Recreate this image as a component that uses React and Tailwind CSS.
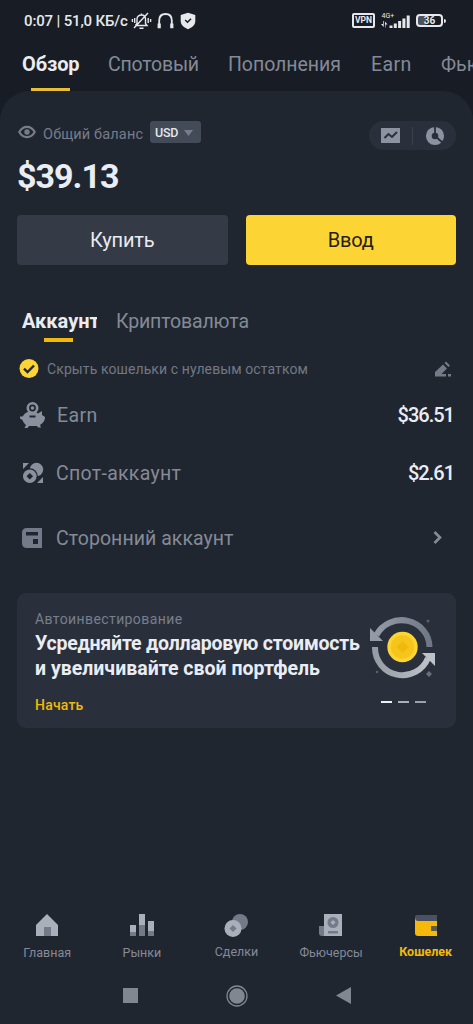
import React from "react";

const TopTab = ({ className, children }) => (
  <span className={`shrink-0 whitespace-nowrap ${className}`}>{children}</span>
);

function StatusBar() {
  return (
    <div className="flex h-[41px] shrink-0 items-center pl-6 pr-[27px] text-[#e6e8ec]">
      <span className="w-[106px] whitespace-nowrap text-[15px] font-medium leading-[22px] tracking-[-0.150px]">0:07 | 51,0 КБ/с</span>
      <svg className="ml-px h-5 w-[21px]" viewBox="0 0 21 20" fill="none" stroke="currentColor" strokeWidth="1.4">
        <path d="M4.500 14.500H16l-1.500-2V8.200C14.500 5.500 13 4 10.500 4S6 5.500 6 8.200v4.300l-1.500 2M8.500 17.200h4M10.500 2.500V4M3.700 7v5M1.400 8v3M17.200 7v5M19.600 8v3M3 17 17 2" />
      </svg>
      <svg className="ml-1 h-5 w-[19px]" viewBox="0 0 19 20" fill="none" stroke="currentColor">
        <path d="M3.200 14V9.500C3.200 5.500 5.700 3 9.500 3s6.300 2.500 6.300 6.500V14" strokeWidth="1.800" />
        <path d="M3.200 12.500v4.700M15.800 12.500v4.700" strokeWidth="3.200" />
      </svg>
      <svg className="ml-[5px] h-5 w-4" viewBox="0 0 16 20">
        <path d="M8 1.700 15.300 4v6c0 4-3.300 6.700-7.300 8.200C4 16.700.700 14 .700 10V4Z" fill="currentColor" />
        <path d="m5.200 9 2.300 2.300 3.500-3.600" fill="none" stroke="#181d25" strokeWidth="1.500" />
      </svg>
      <span className="flex-1" />
      <span className="flex h-[15px] w-[23px] items-center justify-center rounded-[2px] border-2 border-current text-[8.500px] font-bold leading-none">VPN</span>
      <svg className="ml-[6px] h-[18px] w-[30px]" viewBox="0 0 30 18" fill="currentColor">
        <text x="0.500" y="6" fontSize="7" fontFamily="Roboto, sans-serif">4G+</text>
        <path d="M2 9v3H0l2.700 3V9ZM4.500 15.500v-3h2L4 9.500v6ZM8.500 13.500h3V16h-3ZM12.800 11.500h3V16h-3ZM17.100 9h3v7h-3ZM21.400 6.500h3V16h-3ZM25.700 3.500h3V16h-3Z" />
      </svg>
      <span className="ml-[5px] flex h-[13px] w-[27px] items-center justify-center rounded-[4px] border-2 border-current bg-linear-to-r from-[#4d535c] from-35% to-transparent to-35% text-[10px] font-bold leading-none">36</span>
      <span className="ml-px h-1 w-[2px] rounded-r bg-current" />
    </div>
  );
}

function CoinsIcon() {
  return (
    <svg className="h-[22px] w-[22px]" viewBox="0 0 22 22" fill="#8a909d">
      <path d="M1 1h6L1 7ZM21 21h-6l6-6Z" />
      <circle cx="14.500" cy="7.500" r="6.700" />
      <circle cx="7.800" cy="14.200" r="8" fill="#202630" />
      <circle cx="7.800" cy="14.200" r="6.800" />
      <path d="m7.800 10.900 3.300 3.300-3.300 3.300-3.300-3.300Z" fill="#202630" />
    </svg>
  );
}

function NavItem({ icon, label, className }) {
  return (
    <div className="flex flex-1 flex-col items-center">
      <svg className="h-6 w-[26px]" viewBox="0 0 26 24">{icon}</svg>
      <span className={`whitespace-nowrap text-[12.500px] leading-4 ${className}`}>{label}</span>
    </div>
  );
}

export default function App() {
  return (
    <div className="flex h-[1024px] w-[473px] flex-col overflow-hidden bg-[#181d25] font-['Roboto','Noto_Sans',sans-serif] text-[#848a97]">
      <StatusBar />
      <nav className="flex h-[50px] shrink-0 overflow-hidden pt-[10px] text-[19.500px] leading-[28px]">
        <div className="ml-[22px] flex w-[58px] shrink-0 flex-col justify-between">
          <TopTab className="text-[20px] font-bold leading-[26px] tracking-[-0.100px] text-[#eaecef]">Обзор</TopTab>
          <span className="ml-[9px] h-[3px] w-[39px] bg-[#e9bc36]" />
        </div>
        <TopTab className="ml-[28px] w-[120px] tracking-[-0.200px]">Спотовый</TopTab>
        <TopTab className="w-[143px] tracking-[-0.050px]">Пополнения</TopTab>
        <TopTab className="w-[70px] tracking-[0.400px]">Earn</TopTab>
        <TopTab>Фьючерсы</TopTab>
      </nav>

      <main className="flex flex-1 flex-col rounded-t-[30px] bg-[#202630] px-[17px]">
        <div className="mt-[30px] flex h-[30px] items-start">
          <svg className="ml-px mt-[3px] h-4 w-[18px]" viewBox="0 0 18 16" fill="none" stroke="#767c89">
            <path d="M1.300 8C5 1.200 13 1.200 16.700 8 13 14.800 5 14.800 1.300 8Z" strokeWidth="2.200" />
            <circle cx="9" cy="8" r="2.700" fill="#767c89" stroke="none" />
          </svg>
          <span className="ml-[7px] mt-[3px] w-[107px] whitespace-nowrap text-[14.500px] leading-[21px] tracking-[0.150px] text-[#767c89]">Общий баланс</span>
          <span className="flex h-[22px] w-[51px] items-center rounded-[3px] bg-[#434a58] pl-[5px] pt-[2px] text-[12.500px] font-medium tracking-[-0.200px] text-[#e4e7eb]">
            USD
            <svg className="ml-[6px] h-[6px] w-[9px]" viewBox="0 0 9 6"><path d="M0 0h9L4.500 6Z" fill="#767d8b" /></svg>
          </span>
          <div className="ml-auto flex h-[29px] w-[87px] items-center rounded-full bg-[#29303b] pl-3">
            <svg className="h-[15px] w-[19px]" viewBox="0 0 19 15"><path d="M0 0h19v15H0Z" fill="#8c929f" /><path d="m3.500 10 4-4 3.500 3 5-5" fill="none" stroke="#29303b" strokeWidth="2" /></svg>
            <span className="ml-[12px] h-[18px] w-px bg-[#3a414d]" />
            <svg className="ml-[12px] h-5 w-5" viewBox="0 0 20 20"><circle cx="10" cy="10" r="6.200" fill="none" stroke="#8c929f" strokeWidth="5.800" /><path d="M10 10V0M10 10l8 7" stroke="#29303b" strokeWidth="1.800" /></svg>
          </div>
        </div>
        <div className="mt-[5px] h-10 whitespace-nowrap text-[34px] font-bold leading-10 tracking-[-1px] text-[#eaedf3]">$39.13</div>
        <div className="mt-[19px] grid h-[49px] grid-cols-2 gap-[18px] text-[20px] leading-[50px] tracking-[-0.200px]">
          <button className="rounded-[4px] bg-[#343a46] text-[#eaecef]">Купить</button>
          <button className="rounded-[4px] bg-[#fcd535] text-[#252013]">Ввод</button>
        </div>

        <div className="mt-[44px] flex h-[34px] pl-[5px] leading-[26px]">
          <div className="flex w-[75px] flex-col justify-between overflow-hidden whitespace-nowrap">
            <span className="text-[20px] font-bold text-[#eaecef]">Аккаунт</span>
            <span className="ml-[22px] h-1 w-[29px] bg-[#f0b90b]" />
          </div>
          <span className="ml-[19px] whitespace-nowrap text-[19.500px] leading-[28px] tracking-[-0.150px]">Криптовалюта</span>
        </div>

        <div className="mt-[17px] flex h-5 items-center pl-[2px]">
          <svg className="h-5 w-5" viewBox="0 0 20 20"><circle cx="10" cy="9.500" r="9.500" fill="#fcd535" /><path d="m5 9.700 3.500 3.400L15 6.500" fill="none" stroke="#242833" strokeWidth="2.400" /></svg>
          <span className="ml-2 whitespace-nowrap text-[14px] leading-5 tracking-[0.100px] text-[#727885]">Скрыть кошельки с нулевым остатком</span>
          <svg className="ml-auto mr-[4px] h-4 w-[18px]" viewBox="0 0 18 16" fill="#747a87"><path d="M1 15.500V11L9 3.500l4 4L7.500 13H12v2.500ZM10.500 2 12 .500l4 4L14.500 6ZM14 13h3v2.500h-3Z" /></svg>
        </div>

        <div className="mt-[7px] flex h-[58px] items-center pl-[3px]">
          <svg className="h-7 w-[26px]" viewBox="0 0 26 28" fill="#8a909d">
            <circle cx="12.500" cy="7" r="6" />
            <path d="M5 12.500c4-3 10-3 13 0l4-2.500v4l3 2c0 4-2 6-5 8l1 2.500h-3L17 25H9l-1.500 2h-3L6 24c-2-2-3-3-3.500-5L0 17.500v-2h2.500Z" />
            <circle cx="12.500" cy="7" r="2.600" fill="none" stroke="#202630" strokeWidth="1.600" />
            <path d="M9.500 15.500h6" stroke="#202630" strokeWidth="2" />
          </svg>
          <span className="ml-[11px] pt-[2px] text-[19.500px] leading-[26px] tracking-[0.400px]">Earn</span>
          <span className="ml-auto mr-[2px] text-[20px] font-medium tracking-[-1px] text-[#eaecf4]">$36.51</span>
        </div>
        <div className="flex h-[58px] items-center pl-[5px]">
          <CoinsIcon />
          <span className="ml-3 whitespace-nowrap pt-[2px] text-[19.500px] leading-[26px] tracking-[0.300px]">Спот-аккаунт</span>
          <span className="ml-auto mr-[2px] text-[20px] font-medium tracking-[-1px] text-[#eaecf4]">$2.61</span>
        </div>
        <div className="mt-[7px] flex h-[58px] items-center pl-[5px]">
          <svg className="h-5 w-5" viewBox="0 0 20 20"><path d="M0 5Q0 0 5 0h15v20H5Q0 20 0 15Z" fill="#747a89" /><path d="M4 4h12v3.500H4ZM11 11h5v5h-5Z" fill="#202630" /></svg>
          <span className="ml-[14px] whitespace-nowrap pt-[2px] text-[19.500px] leading-[26px] tracking-[0.050px]">Сторонний аккаунт</span>
          <svg className="ml-auto mr-[13px] h-[14px] w-[10px]" viewBox="0 0 10 14"><path d="m1.500 1 5.500 5.500-5.500 5.500" fill="none" stroke="#858b98" strokeWidth="2.600" /></svg>
        </div>

        <section className="mt-[26px] flex h-[135px] justify-between rounded-[9px] bg-[#2a303b] pl-[18px]">
          <div className="flex flex-col whitespace-nowrap">
            <span className="mt-[16px] text-[14px] leading-5 tracking-[0.400px] text-[#777f8c]">Автоинвестирование</span>
            <h2 className="mt-[2px] text-[19.500px] font-bold leading-[25px] text-[#eaecf4]"><span className="tracking-[-0.200px]">Усредняйте долларовую стоимость</span><br />и увеличивайте свой портфель</h2>
            <span className="mt-[14px] text-[14px] font-medium leading-5 tracking-[0.200px] text-[#f0b90b]">Начать</span>
          </div>
          <div className="mr-[19px] flex w-[67px] shrink-0 flex-col items-center pt-[22px]">
            <svg className="h-[64px] w-[67px]" viewBox="0 0 67 64" fill="none">
              <defs>
                <linearGradient id="top" x1="0" x2="1"><stop stopColor="#929ba6" /><stop offset="1" stopColor="#6f7884" /></linearGradient>
                <linearGradient id="bottom" x1="0" x2="1"><stop stopColor="#969ca5" /><stop offset="1" stopColor="#bdc2c9" /></linearGradient>
              </defs>
              <path d="M6.500 20A28 27 0 0 1 59.500 32" stroke="url(#top)" strokeWidth="6" />
              <path d="M0 13v13h13Z" fill="#929ba6" />
              <path d="M5 32A27.500 27.500 0 0 0 58 43" stroke="url(#bottom)" strokeWidth="6" />
              <path d="M52 38h13v13Z" fill="#bdc2c9" />
              <circle cx="32.500" cy="32" r="15.200" fill="#fcd535" />
              <circle cx="32.500" cy="32" r="11.800" fill="#f6c51b" />
              <path d="m32.500 26 6 6-6 6-6-6Z" fill="#f1b90e" />
              <circle cx="58" cy="6" r="1.500" fill="#56606e" />
              <circle cx="7" cy="57" r="1.300" fill="#56606e" />
              <path d="m59 56 3 3-3 3-3-3Z" fill="#66707d" />
            </svg>
            <div className="mt-[22px] flex gap-[6px]">
              <span className="h-[2px] w-[11px] bg-[#eef0f3]" /><span className="h-[2px] w-[11px] bg-[#aab0ba]" /><span className="h-[2px] w-[11px] bg-[#9ba2ad]" />
            </div>
          </div>
        </section>

        <nav className="-mx-[17px] mt-auto flex h-[54px] shrink-0">
          <NavItem label="Главная" className="mt-[8px] tracking-[0.050px]" icon={<><path d="M2 23V12L13 1l11 11v11Z" fill="#a9b0bc" /><path d="M10 14h7v9h-7Z" fill="#747a88" /></>} />
          <NavItem label="Рынки" className="mt-[8px]" icon={<><path d="M1 12h6v7H1ZM10 1h6v11h-6ZM19 8h6v10h-6Z" fill="#a9b0bc" /><path d="M1 19h6v4H1ZM10 12h6v11h-6ZM19 18h6v5h-6Z" fill="#747a88" /></>} />
          <NavItem label="Сделки" className="mt-[7px]" icon={<><circle cx="17" cy="9" r="8" fill="#747a88" /><circle cx="10" cy="15.500" r="8.500" fill="#a9b0bc" /><path d="m10 12 3.500 3.500L10 19l-3.500-3.500Z" fill="#747a88" /></>} />
          <NavItem label="Фьючерсы" className="mt-[8px]" icon={<><path d="M1 13h5v10H4q-3 0-3-3Z" fill="#747a88" /><path d="M6 1h18v22H6Z" fill="#a9b0bc" /><circle cx="15" cy="9.500" r="5.500" fill="#747a88" /><path d="m15 7 2.500 2.500L15 12l-2.500-2.500Z" fill="#a9b0bc" /><path d="M10 18h10v2.500H10Z" fill="#747a88" /></>} />
          <NavItem label="Кошелек" className="mt-[7px] font-bold text-[#f0b90b]" icon={<><path d="M2 4q0-2 2-2h20v7H2Z" fill="#4b5160" /><path d="M2 4q0 4 3 4h19v15H5q-3 0-3-3Z" fill="#f5b90c" /><path d="M18 13h6v5h-6Z" fill="#5b5b55" /></>} />
        </nav>
        <div className="flex h-[57px] shrink-0 items-center justify-center gap-[88px]">
          <span className="h-[15px] w-[15px] bg-[#82868e]" />
          <svg className="h-[22px] w-[22px]" viewBox="0 0 22 22"><circle cx="11" cy="11" r="10" fill="none" stroke="#82868e" strokeWidth="1.300" /><circle cx="11" cy="11" r="7.800" fill="#82868e" /></svg>
          <svg className="h-[17px] w-[15px]" viewBox="0 0 15 17"><path d="M15 0v17L0 8.500Z" fill="#82868e" /></svg>
        </div>
      </main>
    </div>
  );
}
